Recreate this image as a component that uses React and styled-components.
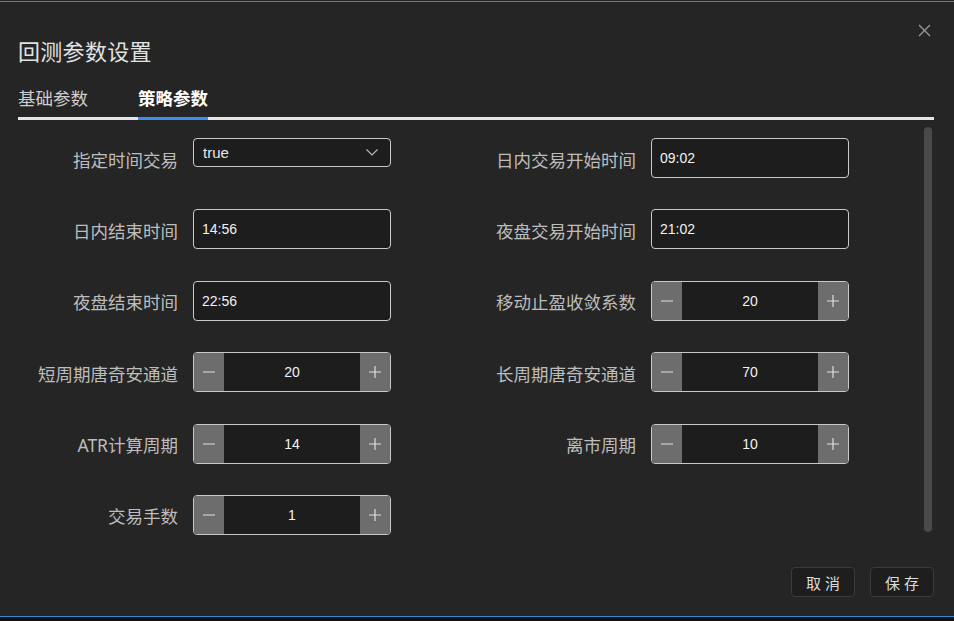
import React, { useState } from 'react';
import styled, { createGlobalStyle } from 'styled-components';

const GlobalStyle = createGlobalStyle`
  html, body {
    margin: 0;
    padding: 0;
    background: #111111;
  }
  * {
    box-sizing: border-box;
  }
`;

// Layout de la page
const Page = styled.div`
  width: 954px;
  height: 621px;
  display: flex;
  flex-direction: column;
  background: #111111;
  font-family: "Noto Sans", "Noto Sans CJK SC", sans-serif;
  overflow: hidden;
`;

const TopEdge = styled.div`
  height: 2px;
  background: #252525;
  border-bottom: 1px solid #2f89cf;
`;

const Dialog = styled.div`
  position: relative;
  height: 615px;
  display: flex;
  flex-direction: column;
  padding: 34px 20px 19px 18px;
  background: #252525;
  border-bottom: 1px solid #2f89cf;
`;

const Title = styled.h2`
  margin: 0;
  font-size: 22px;
  line-height: 30px;
  font-weight: 400;
  color: #e2e2e2;
  letter-spacing: 0.3px;
`;

const CloseButton = styled.button`
  position: absolute;
  top: 21px;
  right: 23px;
  width: 14px;
  height: 14px;
  padding: 0;
  border: none;
  background: transparent;
  display: flex;
  align-items: center;
  justify-content: center;
  cursor: pointer;
`;

const TabBar = styled.div`
  display: flex;
  gap: 50px;
  margin-top: 20px;
  border-bottom: 3px solid #e4e4ec;
`;

const Tab = styled.div`
  font-size: 17.5px;
  line-height: 24px;
  padding-bottom: 7px;
  margin-bottom: -3px;
  color: ${(p) => (p.$active ? '#ffffff' : '#cfcfcf')};
  font-weight: ${(p) => (p.$active ? 700 : 400)};
  border-bottom: 3px solid ${(p) => (p.$active ? '#3b8ff0' : 'transparent')};
  cursor: pointer;
`;

const Body = styled.div`
  height: 420px;
  display: flex;
  justify-content: space-between;
`;

const FormGrid = styled.div`
  display: grid;
  grid-template-columns: 373px 373px;
  column-gap: 85px;
  row-gap: 31.4px;
  align-content: start;
  padding-top: 18px;
`;

const Field = styled.div`
  display: flex;
  align-items: center;
  gap: 15px;
  height: 40px;
`;

const Label = styled.label`
  width: 160px;
  text-align: right;
  font-size: 17.5px;
  line-height: 24px;
  color: #bdbdbd;
  white-space: nowrap;
  margin-top: 3px;
`;

const Control = styled.div`
  width: 198px;
  align-self: ${(p) => (p.$top ? 'flex-start' : 'center')};
`;

const SelectBox = styled.div`
  height: 29px;
  display: flex;
  align-items: center;
  justify-content: space-between;
  padding: 0 12px 0 9px;
  background: #1d1d1d;
  border: 1px solid #c9c9c9;
  border-radius: 4px;
  font-family: "Liberation Sans", Arial, sans-serif;
  font-size: 15px;
  color: #e6e6e6;
`;

const TextInput = styled.input`
  width: 100%;
  height: 40px;
  padding: 0 8px;
  background: #1d1d1d;
  border: 1px solid #c9c9c9;
  border-radius: 4px;
  font-family: "Liberation Sans", Arial, sans-serif;
  font-size: 14px;
  color: #f2f2f2;
  outline: none;
`;

const Stepper = styled.div`
  height: 40px;
  display: flex;
  border: 1px solid #c9c9c9;
  border-radius: 4px;
  overflow: hidden;
  background: #1d1d1d;
`;

const StepButton = styled.button`
  width: 30px;
  flex: none;
  padding: 0;
  border: none;
  background: #6d6d6d;
  display: flex;
  align-items: center;
  justify-content: center;
  cursor: pointer;
`;

const StepValue = styled.div`
  flex: 1;
  display: flex;
  align-items: center;
  justify-content: center;
  font-family: "Liberation Sans", Arial, sans-serif;
  font-size: 14px;
  color: #f2f2f2;
`;

const ScrollThumb = styled.div`
  width: 8px;
  height: 405px;
  margin-top: 7px;
  margin-right: 2px;
  border-radius: 4px;
  background: #4a4a4c;
`;

const Footer = styled.div`
  margin-top: auto;
  display: flex;
  justify-content: flex-end;
  gap: 15px;
`;

const FooterButton = styled.button`
  width: 64px;
  height: 30px;
  padding: 0 0 0 4px;
  background: #1e1e1e;
  border: 1px solid #3b3b3b;
  border-radius: 4px;
  font-family: "Noto Sans CJK SC", sans-serif;
  font-size: 15px;
  letter-spacing: 4px;
  color: #dcdcdc;
  cursor: pointer;
`;

const CloseIcon = () => (
  <svg width="13" height="13" viewBox="0 0 13 13">
    <path d="M1 1 L12 12 M12 1 L1 12" stroke="#9a9a9a" strokeWidth="1.3" fill="none" />
  </svg>
);

const Chevron = () => (
  <svg width="12" height="7" viewBox="0 0 12 7">
    <polyline points="0.5,0.5 6,6 11.5,0.5" stroke="#bdbdbd" strokeWidth="1.1" fill="none" />
  </svg>
);

const MinusIcon = () => (
  <svg width="12" height="12" viewBox="0 0 12 12">
    <path d="M0 6 H12" stroke="#e0e0e0" strokeWidth="1.2" />
  </svg>
);

const PlusIcon = () => (
  <svg width="12" height="12" viewBox="0 0 12 12">
    <path d="M0 6 H12 M6 0 V12" stroke="#e0e0e0" strokeWidth="1.2" />
  </svg>
);

const fields = [
  { label: '指定时间交易', type: 'select', value: 'true' },
  { label: '日内交易开始时间', type: 'text', value: '09:02' },
  { label: '日内结束时间', type: 'text', value: '14:56' },
  { label: '夜盘交易开始时间', type: 'text', value: '21:02' },
  { label: '夜盘结束时间', type: 'text', value: '22:56' },
  { label: '移动止盈收敛系数', type: 'number', value: 20 },
  { label: '短周期唐奇安通道', type: 'number', value: 20 },
  { label: '长周期唐奇安通道', type: 'number', value: 70 },
  { label: 'ATR计算周期', type: 'number', value: 14 },
  { label: '离市周期', type: 'number', value: 10 },
  { label: '交易手数', type: 'number', value: 1 },
];

const NumberStepper = ({ value, onChange }) => (
  <Stepper>
    <StepButton onClick={() => onChange(value - 1)}>
      <MinusIcon />
    </StepButton>
    <StepValue>{value}</StepValue>
    <StepButton onClick={() => onChange(value + 1)}>
      <PlusIcon />
    </StepButton>
  </Stepper>
);

const App = () => {
  const [tab, setTab] = useState(1);
  const [values, setValues] = useState(fields.map((f) => f.value));

  const update = (i, v) => {
    const next = [...values];
    next[i] = v;
    setValues(next);
  };

  return (
    <>
      <GlobalStyle />
      <Page>
        <TopEdge />
        <Dialog>
          <Title>回测参数设置</Title>
          <CloseButton>
            <CloseIcon />
          </CloseButton>
          <TabBar>
            <Tab $active={tab === 0} onClick={() => setTab(0)}>基础参数</Tab>
            <Tab $active={tab === 1} onClick={() => setTab(1)}>策略参数</Tab>
          </TabBar>
          <Body>
            <FormGrid>
              {fields.map((f, i) => (
                <Field key={f.label}>
                  <Label>{f.label}</Label>
                  <Control $top={f.type === 'select'}>
                    {f.type === 'select' && (
                      <SelectBox>
                        {values[i]}
                        <Chevron />
                      </SelectBox>
                    )}
                    {f.type === 'text' && (
                      <TextInput value={values[i]} onChange={(e) => update(i, e.target.value)} />
                    )}
                    {f.type === 'number' && (
                      <NumberStepper value={values[i]} onChange={(v) => update(i, v)} />
                    )}
                  </Control>
                </Field>
              ))}
            </FormGrid>
            <ScrollThumb />
          </Body>
          <Footer>
            <FooterButton>取消</FooterButton>
            <FooterButton>保存</FooterButton>
          </Footer>
        </Dialog>
      </Page>
    </>
  );
};

export default App;
